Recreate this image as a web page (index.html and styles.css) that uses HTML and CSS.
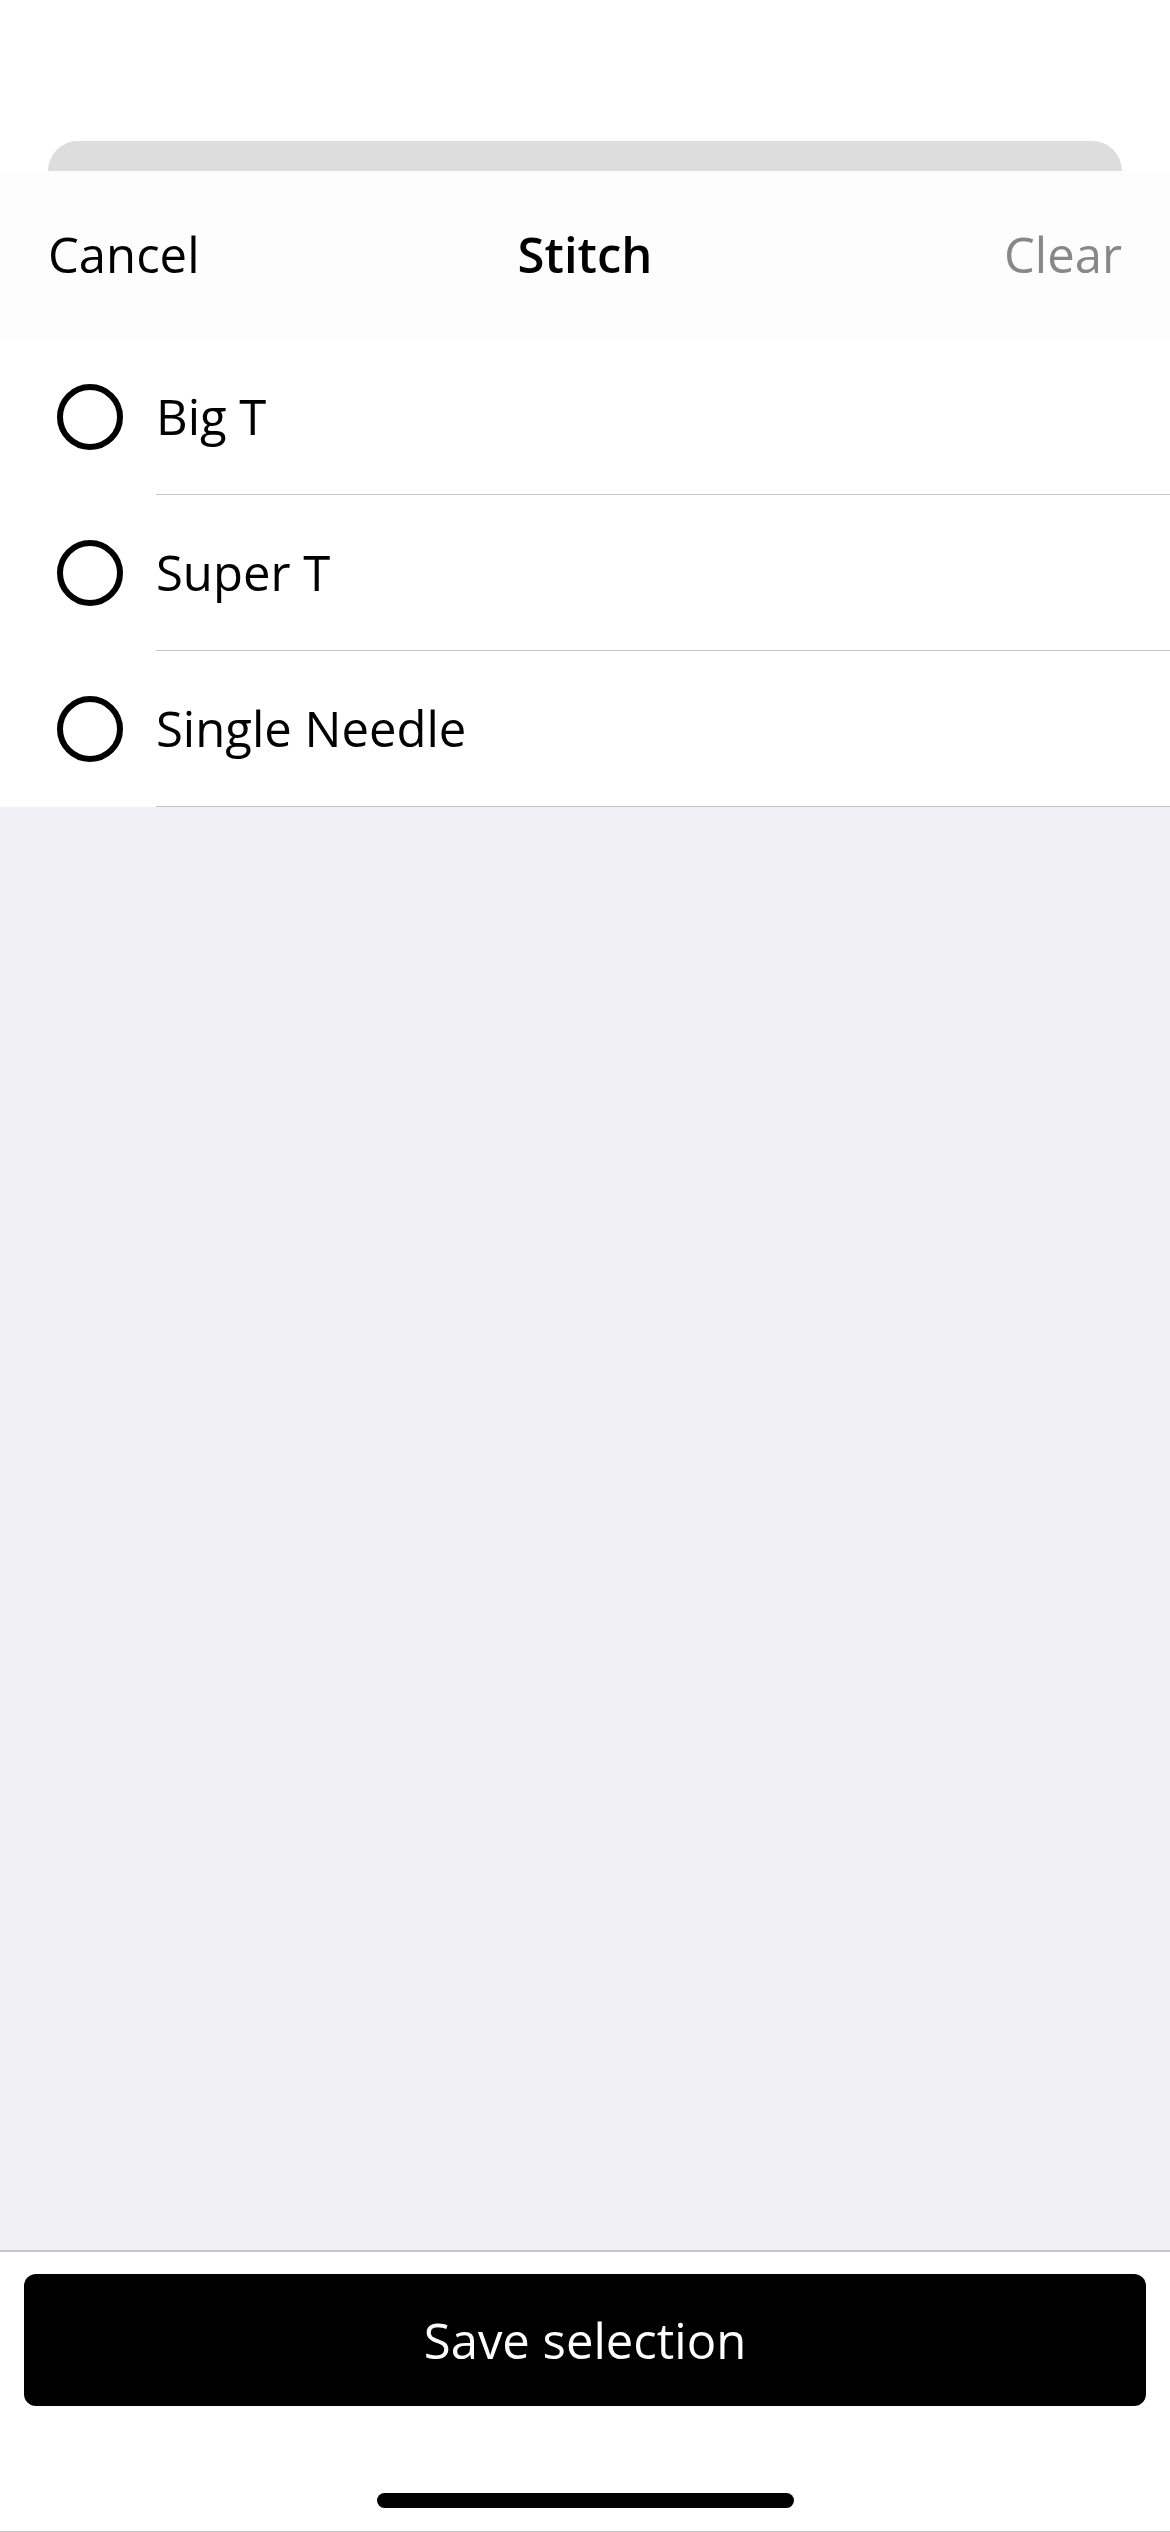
FILE: index.html
```html
<!DOCTYPE html>
<html lang="en">
  <head>
    <meta charset="UTF-8" />
    <meta name="viewport" content="width=device-width, initial-scale=1.0" />
    <title>Stitch</title>
    <link rel="stylesheet" href="styles.css">
  </head>
  <body>
    <div class="backdrop">
      <div class="card-behind"></div>
    </div>

    <form class="sheet">
      <header class="sheet-header">
        <button type="button" class="header-button">Cancel</button>
        <h1>Stitch</h1>
        <button type="reset" class="header-button clear" disabled>Clear</button>
      </header>

      <main class="options">
        <label class="option">
          <input type="radio" name="stitch" value="big-t" />
          <span class="option-name">Big T</span>
        </label>
        <label class="option">
          <input type="radio" name="stitch" value="super-t" />
          <span class="option-name">Super T</span>
        </label>
        <label class="option">
          <input type="radio" name="stitch" value="single-needle" />
          <span class="option-name">Single Needle</span>
        </label>
      </main>

      <footer class="sheet-footer">
        <button type="submit" class="save-button">Save selection</button>
        <div class="home-indicator"></div>
      </footer>
    </form>

    <script>
      const form = document.querySelector(".sheet");
      const clearButton = document.querySelector(".clear");

      form.addEventListener("change", () => {
        clearButton.disabled = false;
      });

      form.addEventListener("reset", () => {
        clearButton.disabled = true;
      });

      form.addEventListener("submit", (e) => {
        e.preventDefault();
      });
    </script>
  </body>
</html>
```
FILE: styles.css
```css
* {
  box-sizing: border-box;
}

body {
  font-family: "Open Sans", "Noto Sans", sans-serif;
  font-size: 49px;
  font-weight: 380;
  line-height: 72px;
  display: flex;
  flex-direction: column;
  min-height: 100vh;
  margin: 0;
  color: #000000;
  background-color: #ffffff;
}

button {
  font: inherit;
  border: none;
  cursor: pointer;
}

/* Edge of the previous screen, above the sheet */
.backdrop {
  padding: 141px 48px 0;
}

.card-behind {
  height: 30px;
  border-radius: 30px 30px 0 0;
  background-color: #dddddd;
}

.sheet {
  flex: 1;
  display: flex;
  flex-direction: column;
  background-color: #f0f0f5;
}

.sheet-header {
  display: grid;
  grid-template-columns: 1fr auto 1fr;
  align-items: center;
  padding: 47px 48px 49px;
  background-color: #fdfdfd;
}

.sheet-header h1 {
  margin: 0;
  font-size: inherit;
  font-weight: 600;
}

.header-button {
  justify-self: start;
  padding: 0;
  background: none;
  color: #000000;
}

.clear {
  justify-self: end;
}

.clear:disabled {
  color: #888888;
  cursor: default;
}

.options {
  flex: 1;
}

.option {
  display: flex;
  align-items: center;
  padding-left: 57px;
  background-color: #ffffff;
  cursor: pointer;
}

.option input {
  appearance: none;
  width: 66px;
  height: 66px;
  margin: 0 33px 0 0;
  border: 6px solid #000000;
  border-radius: 50%;
  cursor: pointer;
}

.option input:checked {
  border-width: 18px;
}

.option-name {
  flex: 1;
  padding: 41px 0 42px;
  border-bottom: 1px solid #c6c6c8;
}

.sheet-footer {
  padding: 22px 24px 23px;
  border-top: 2px solid #c6c6c8;
  border-bottom: 1px solid #c6c6c8;
  background-color: #ffffff;
}

.save-button {
  display: block;
  width: 100%;
  padding: 30px;
  border-radius: 12px;
  background-color: #000000;
  color: #ffffff;
}

.home-indicator {
  width: 417px;
  height: 15px;
  margin: 87px auto 0;
  border-radius: 8px;
  background-color: #000000;
}
```
